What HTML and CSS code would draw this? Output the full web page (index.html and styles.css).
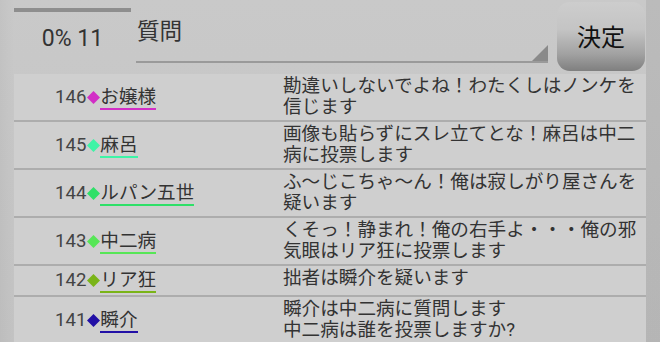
FILE: index.html
```html
<!DOCTYPE html>
<html lang="ja">
<head>
<meta charset="utf-8">
<link rel="stylesheet" href="styles.css">
</head>
<body>
<div class="page">
  <header class="header">
    <div class="status">
      <div class="progress"></div>
      <div class="count">0% 11</div>
    </div>
    <div class="input">質問</div>
    <button class="decide">決定</button>
  </header>
  <main class="list">
    <div class="row">
      <div class="who"><span class="num">146</span><svg class="dia" viewBox="0 0 13 13"><polygon points="6.5,0 13,6.5 6.5,13 0,6.5" fill="#d22ec6"/></svg><span class="name c146">お嬢様</span></div>
      <div class="msg">勘違いしないでよね！わたくしはノンケを信じます</div>
    </div>
    <div class="row">
      <div class="who"><span class="num">145</span><svg class="dia" viewBox="0 0 13 13"><polygon points="6.5,0 13,6.5 6.5,13 0,6.5" fill="#3ef4a6"/></svg><span class="name c145">麻呂</span></div>
      <div class="msg">画像も貼らずにスレ立てとな！麻呂は中二病に投票します</div>
    </div>
    <div class="row">
      <div class="who"><span class="num">144</span><svg class="dia" viewBox="0 0 13 13"><polygon points="6.5,0 13,6.5 6.5,13 0,6.5" fill="#2ee068"/></svg><span class="name c144">ルパン五世</span></div>
      <div class="msg">ふ〜じこちゃ〜ん！俺は寂しがり屋さんを疑います</div>
    </div>
    <div class="row">
      <div class="who"><span class="num">143</span><svg class="dia" viewBox="0 0 13 13"><polygon points="6.5,0 13,6.5 6.5,13 0,6.5" fill="#56e656"/></svg><span class="name c143">中二病</span></div>
      <div class="msg">くそっ！静まれ！俺の右手よ・・・俺の邪気眼はリア狂に投票します</div>
    </div>
    <div class="row">
      <div class="who"><span class="num">142</span><svg class="dia" viewBox="0 0 13 13"><polygon points="6.5,0 13,6.5 6.5,13 0,6.5" fill="#7ab418"/></svg><span class="name c142">リア狂</span></div>
      <div class="msg">拙者は瞬介を疑います</div>
    </div>
    <div class="row">
      <div class="who"><span class="num">141</span><svg class="dia" viewBox="0 0 13 13"><polygon points="6.5,0 13,6.5 6.5,13 0,6.5" fill="#2210a6"/></svg><span class="name c141">瞬介</span></div>
      <div class="msg">瞬介は中二病に質問します<br>中二病は誰を投票しますか?</div>
    </div>
  </main>
</div>
</body>
</html>
```

FILE: styles.css
```css
html, body {
  margin: 0;
  padding: 0;
}
body {
  width: 660px;
  height: 342px;
  overflow: hidden;
  background: linear-gradient(to bottom, #c9c9c9 0%, #c3c3c3 100%);
  font-family: "Roboto", "Noto Sans CJK JP", sans-serif;
  color: #333;
}
.page {
  display: flex;
  flex-direction: column;
  height: 342px;
  background: linear-gradient(to right, rgba(0,0,0,0.03) 0, rgba(0,0,0,0) 14px, rgba(0,0,0,0) 646px, rgba(0,0,0,0.07) 646px);
}
.header {
  display: flex;
  align-items: flex-start;
  height: 74px;
  flex: none;
}
.status {
  margin-left: 14px;
  width: 117px;
  display: flex;
  flex-direction: column;
}
.progress {
  margin-top: 8px;
  height: 4px;
  background: #8e8e8e;
}
.count {
  margin-top: 13px;
  text-align: center;
  font-family: "Roboto", sans-serif;
  font-size: 23px;
  line-height: 27px;
  color: #333;
}
.input {
  margin-left: 5px;
  width: 411px;
  box-sizing: content-box;
  border-bottom: 2px solid #9a9a9a;
  font-size: 22.6px;
  line-height: 28px;
  padding-top: 18px;
  height: 43px;
  padding-left: 1px;
  color: #333;
  position: relative;
}
.input::after {
  content: "";
  position: absolute;
  right: 0;
  bottom: 0;
  width: 0;
  height: 0;
  border-left: 16px solid transparent;
  border-bottom: 16px solid #8a8a8a;
}
.decide {
  margin-left: 9px;
  margin-top: 2px;
  width: 88px;
  height: 69px;
  border: none;
  border-radius: 13px;
  background: linear-gradient(to bottom, #cdcdcd 0%, #c4c4c4 40%, #a2a2a2 75%, #7f7f7f 100%);
  font-family: "Noto Sans CJK JP", sans-serif;
  font-size: 24px;
  color: #111;
  padding: 0;
  padding-bottom: 2px;
}
.list {
  margin: 0 14px;
  background: #cfcfcf;
  flex: none;
}
.row {
  display: grid;
  grid-template-columns: 269px 1fr;
  border-bottom: 2px solid #adadad;
  padding: 2px 0;
}
.who {
  display: flex;
  align-items: center;
  padding-left: 41px;
  font-size: 18.6px;
  line-height: 21px;
}
.num {
  color: #444;
  font-family: "Roboto", sans-serif;
}
.dia {
  width: 13px;
  height: 13px;
  margin: 0 0 0 1px;
}
.name {
  color: #333;
  line-height: 21px;
  border-bottom: 2px solid;
  margin-top: 2px;
}
.c146 { border-color: #d22ec6; }
.c145 { border-color: #3ef4a6; }
.c144 { border-color: #2ee068; }
.c143 { border-color: #56e656; }
.c142 { border-color: #7ab418; }
.c141 { border-color: #2210a6; }
.msg {
  font-size: 18.6px;
  line-height: 21px;
  color: #333;
  padding-right: 4px;
}
```
